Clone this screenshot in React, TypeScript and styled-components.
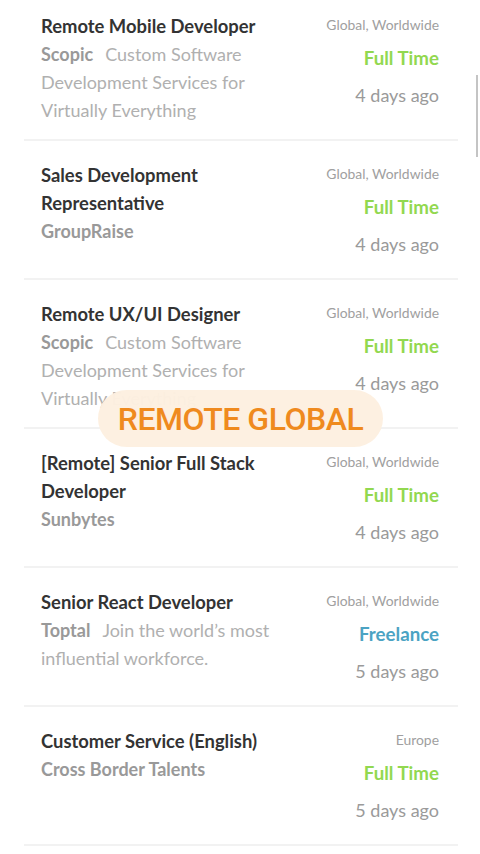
import styled, { createGlobalStyle } from 'styled-components';

type Job = {
  id: number;
  title: string;
  company: string;
  tagline?: string;
  location: string;
  type: 'Full Time' | 'Freelance';
  posted: string;
};

const jobs: Job[] = [
  {
    id: 1,
    title: 'Remote Mobile Developer',
    company: 'Scopic',
    tagline: 'Custom Software Development Services for Virtually Everything',
    location: 'Global, Worldwide',
    type: 'Full Time',
    posted: '4 days ago',
  },
  {
    id: 2,
    title: 'Sales Development Representative',
    company: 'GroupRaise',
    location: 'Global, Worldwide',
    type: 'Full Time',
    posted: '4 days ago',
  },
  {
    id: 3,
    title: 'Remote UX/UI Designer',
    company: 'Scopic',
    tagline: 'Custom Software Development Services for Virtually Everything',
    location: 'Global, Worldwide',
    type: 'Full Time',
    posted: '4 days ago',
  },
  {
    id: 4,
    title: '[Remote] Senior Full Stack Developer',
    company: 'Sunbytes',
    location: 'Global, Worldwide',
    type: 'Full Time',
    posted: '4 days ago',
  },
  {
    id: 5,
    title: 'Senior React Developer',
    company: 'Toptal',
    tagline: 'Join the world\u2019s most influential workforce.',
    location: 'Global, Worldwide',
    type: 'Freelance',
    posted: '5 days ago',
  },
  {
    id: 6,
    title: 'Customer Service (English)',
    company: 'Cross Border Talents',
    location: 'Europe',
    type: 'Full Time',
    posted: '5 days ago',
  },
];

const App = () => {
  return (
    <>
      <GlobalStyle />
      <Page>
        <List>
          {jobs.map((job) => (
            <Card key={job.id}>
              <Info>
                <Title>{job.title}</Title>
                <Company>
                  <strong>{job.company}</strong>
                  {job.tagline && <Tagline>{job.tagline}</Tagline>}
                </Company>
              </Info>
              <Meta>
                <Location>{job.location}</Location>
                <JobType freelance={job.type === 'Freelance'}>{job.type}</JobType>
                <Posted>{job.posted}</Posted>
              </Meta>
            </Card>
          ))}
        </List>
        <Toast>REMOTE GLOBAL</Toast>
        <ScrollThumb />
      </Page>
    </>
  );
};

export default App;

const GlobalStyle = createGlobalStyle`
  html, body {
    margin: 0;
    padding: 0;
    background: #ffffff;
    overflow: hidden;
  }
  body {
    font-family: Lato, 'Open Sans', sans-serif;
  }
`;

const Page = styled.div`
  width: 480px;
  height: 854px;
  overflow: hidden;
  position: relative;
  background: #ffffff;
`;

const List = styled.div`
  display: flex;
  flex-direction: column;
  margin-top: -8px;
  padding: 0 22px 0 24px;
`;

const Card = styled.div`
  display: flex;
  flex-direction: row;
  justify-content: space-between;
  padding: 20px 19px 15px 17px;
  border-bottom: 2px solid #f2f2f2;
  min-height: 102px;
`;

const Info = styled.div`
  width: 250px;
  display: flex;
  flex-direction: column;
`;

const Title = styled.h2`
  margin: 0;
  font: 700 18.4px/28px Lato, sans-serif;
  color: #333333;
`;

const Company = styled.p`
  margin: 0;
  font: 400 18px/28px Lato, sans-serif;
  color: #a6a6a6;

  strong {
    font-weight: 700;
    color: #999999;
  }
`;

const Tagline = styled.span`
  margin-left: 12px;
  color: #b0b0b0;
`;

const Meta = styled.div`
  display: flex;
  flex-direction: column;
  align-items: flex-end;
  text-align: right;
`;

const Location = styled.span`
  font: 400 13.9px/26px Lato, sans-serif;
  color: #a0a0a0;
`;

const JobType = styled.span<{ freelance: boolean }>`
  margin-top: 6px;
  font: 700 18.7px/28px Lato, sans-serif;
  color: ${({ freelance }) => (freelance ? '#4ba3c3' : '#92d850')};
`;

const Posted = styled.span`
  margin-top: 9px;
  font: 400 18px/28px Lato, sans-serif;
  color: #9a9a9a;
`;

const Toast = styled.div`
  position: absolute;
  left: 98px;
  top: 390px;
  width: 285px;
  height: 57px;
  border-radius: 29px;
  background: rgba(253, 240, 224, 0.97);
  display: flex;
  align-items: center;
  justify-content: center;
  font: 500 32px/1 Roboto, sans-serif;
  letter-spacing: -0.5px;
  color: #ef8a1e;
`;

const ScrollThumb = styled.div`
  position: absolute;
  right: 2px;
  top: 75px;
  width: 2px;
  height: 82px;
  background: #c4c4c4;
`;
